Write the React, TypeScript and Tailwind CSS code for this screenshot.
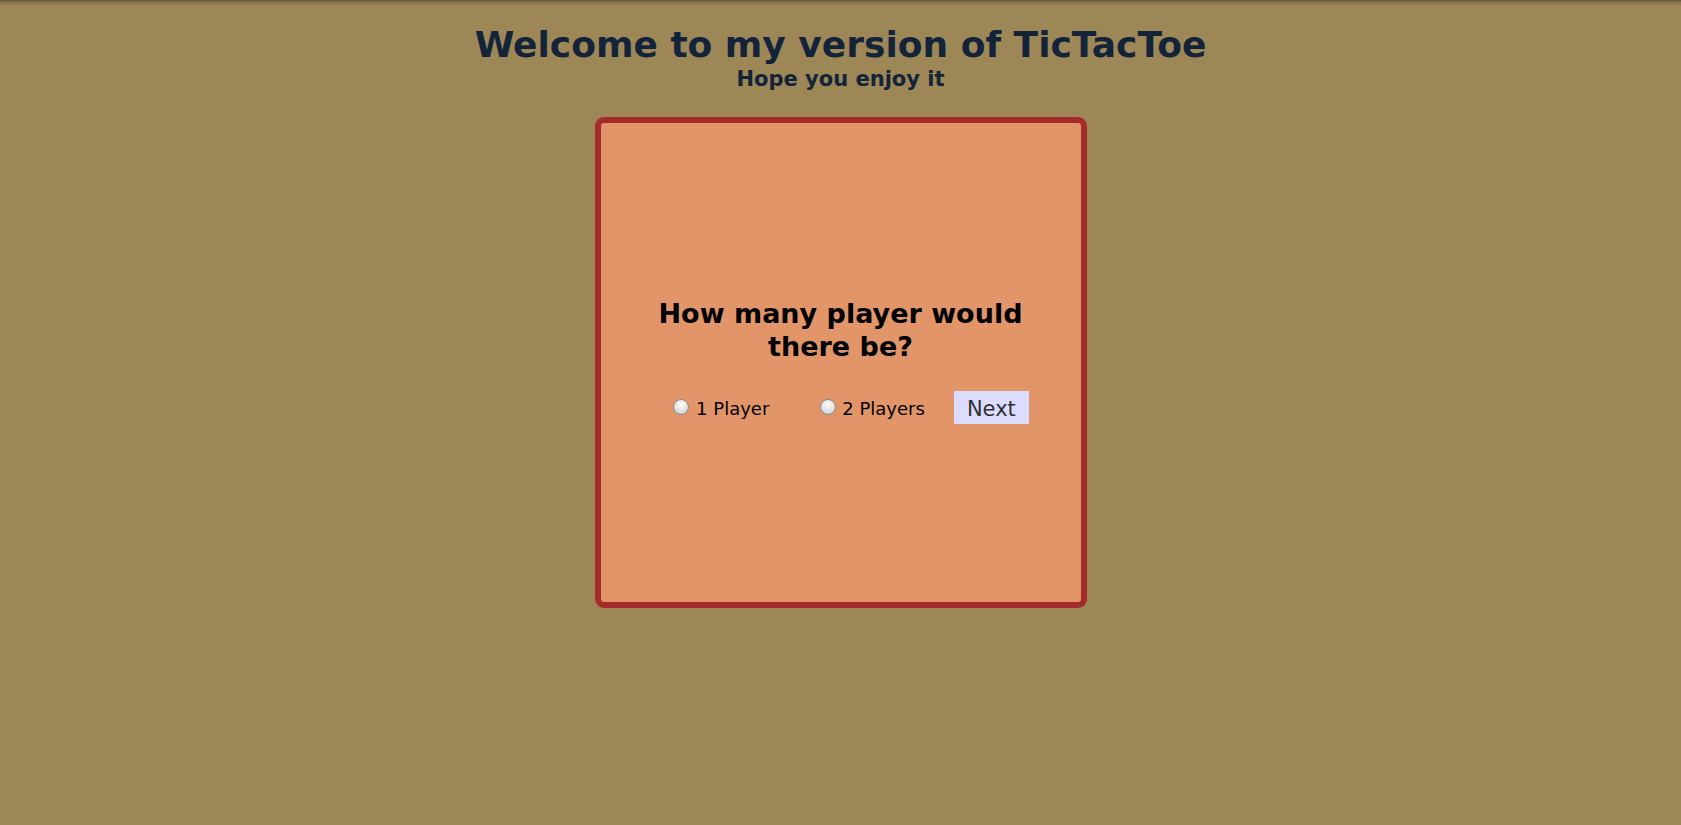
export default function App() {
  return (
    <div
      className="min-h-screen bg-[#9e8756] bg-[linear-gradient(to_bottom,#5e5036_0px,#857149_2px,#9e8756_6px)] flex flex-col items-center pt-[24px]"
      style={{ fontFamily: '"DejaVu Sans", sans-serif' }}
    >
      <h1 className="text-[36px] font-bold text-[#12233a] leading-[42px]">Welcome to my version of TicTacToe</h1>
      <h3 className="mt-[1px] text-[21px] font-bold text-[#12233a] leading-[24px]">Hope you enjoy it</h3>
      <div className="mt-[26px] w-[492px] h-[491px] rounded-[9px] border-[6px] border-[#a52a2a] bg-[#e19569] flex flex-col items-center justify-center pb-[5px]">
        <h2 className="text-[27px] font-bold text-black leading-[33px] text-center w-[380px]">
          How many player would there be?
        </h2>
        <div className="mt-[28px] flex items-center text-[18px] text-black pl-[21px]">
          <label className="flex items-center pt-[2px]">
            <input
              type="radio"
              name="players"
              className="appearance-none w-[16px] h-[16px] rounded-full border border-[#8a8a8a] bg-[radial-gradient(circle_at_50%_35%,#ffffff,#c8c8c8)] mr-[7px] -mt-[2px]"
            />
            1 Player
          </label>
          <label className="flex items-center ml-[51px] pt-[2px]">
            <input
              type="radio"
              name="players"
              className="appearance-none w-[16px] h-[16px] rounded-full border border-[#8a8a8a] bg-[radial-gradient(circle_at_50%_35%,#ffffff,#c8c8c8)] mr-[6px] -mt-[2px]"
            />
            2 Players
          </label>
          <button className="ml-[29px] w-[75px] h-[33px] bg-[#dcdcff] text-[#303030] text-[21px] pt-[3px]">Next</button>
        </div>
      </div>
    </div>
  );
}
